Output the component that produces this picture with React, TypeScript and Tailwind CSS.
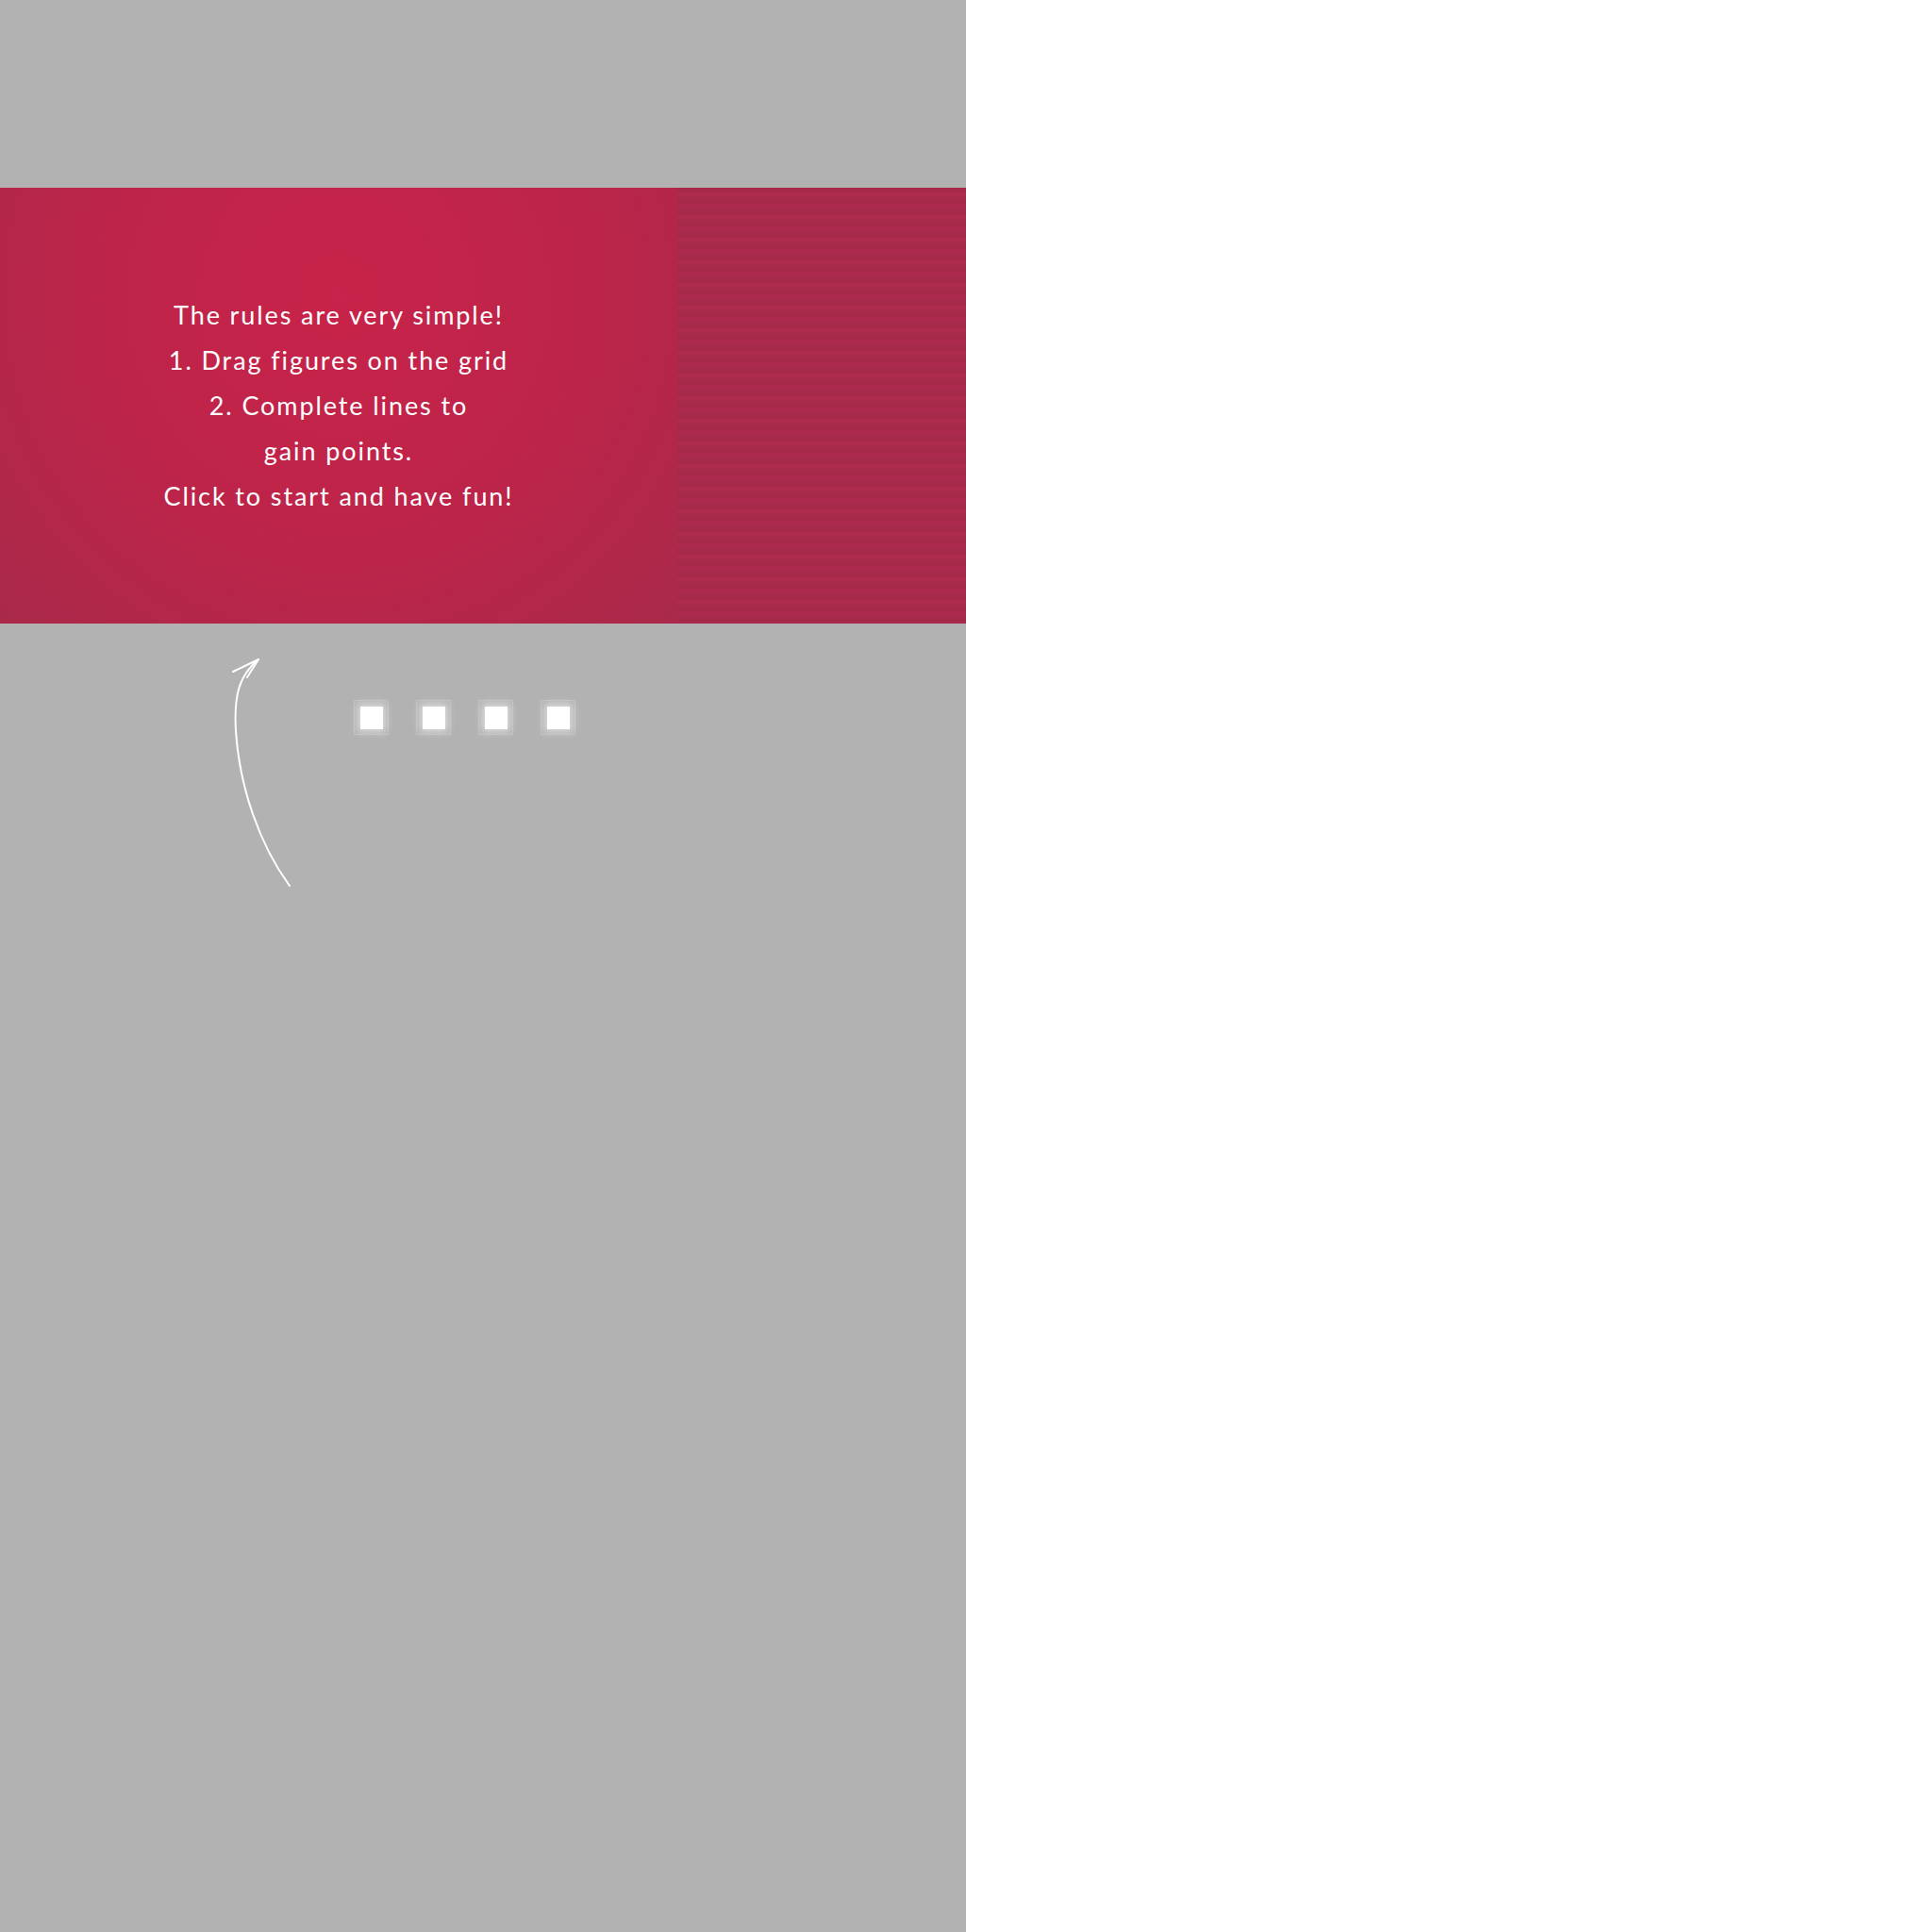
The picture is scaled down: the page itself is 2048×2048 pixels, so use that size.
const rules = [
  "The rules are very simple!",
  "1. Drag figures on the grid",
  "2. Complete lines to",
  "gain points.",
  "Click to start and have fun!",
];

function Slot() {
  return (
    <div className="flex h-[37px] w-[37px] items-center justify-center border border-white/15 bg-white/[0.03]">
      <div className="h-[24px] w-[24px] bg-white shadow-[0_0_8px_3px_rgba(255,255,255,0.5)]" />
    </div>
  );
}

function Arrow() {
  return (
    <svg width="75" height="250" viewBox="0 0 75 250" fill="none" className="shrink-0">
      <path
        d="M67 244 C 35 200, 14 140, 10 80 C 8 45, 12 22, 34 4"
        stroke="white"
        strokeWidth="2"
        strokeLinecap="round"
      />
      <path d="M34 4 L7 17 M34 4 L22 23" stroke="white" strokeWidth="2" strokeLinecap="round" />
    </svg>
  );
}

export default function App() {
  return (
    <div className="flex min-h-[2048px] w-full bg-white">
      <div className="flex w-[1024px] flex-col bg-[#b2b2b2]">
        <div className="h-[199px]" />

        <div className="flex h-[462px]">
          <div className="flex w-[718px] items-center justify-center bg-[radial-gradient(ellipse_70%_110%_at_50%_25%,#c8234a_0%,#bd2449_50%,#a92a4b_100%)]">
            <div
              className="text-center text-[27px] leading-[48px] tracking-[1.9px] text-white"
              style={{ fontFamily: "Lato, 'Open Sans', sans-serif" }}
            >
              {rules.map((line) => (
                <div key={line}>{line}</div>
              ))}
            </div>
          </div>
          <div className="flex-1 bg-[repeating-linear-gradient(180deg,#a7294a_0px,#a7294a_5px,#ae2b4f_5px,#ae2b4f_8px,#a92a4c_8px,#a92a4c_12px)]" />
        </div>

        <div className="flex items-start pl-[240px] pt-[34px]">
          <Arrow />
          <div className="ml-[60px] mt-[47px] flex gap-[29px]">
            <Slot />
            <Slot />
            <Slot />
            <Slot />
          </div>
        </div>
      </div>
    </div>
  );
}
